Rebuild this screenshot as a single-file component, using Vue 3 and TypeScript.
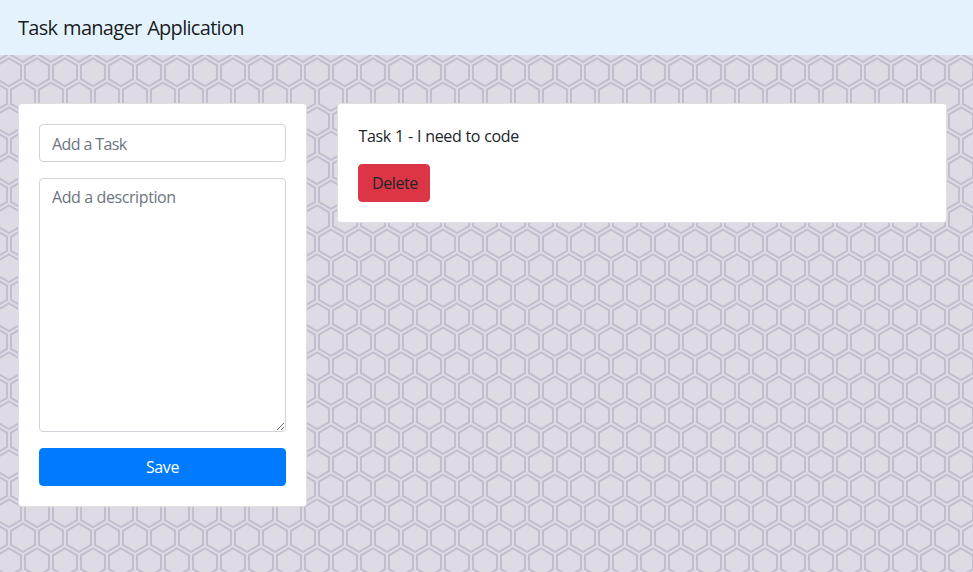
<script setup lang="ts">
import { ref } from 'vue'

interface Task {
  id: number
  title: string
  description: string
}

const title = ref('')
const description = ref('')
const tasks = ref<Task[]>([{ id: 1, title: 'Task 1', description: 'I need to code' }])

function save(): void {
  if (!title.value.trim()) return
  tasks.value.push({ id: Date.now(), title: title.value, description: description.value })
  title.value = ''
  description.value = ''
}

function remove(id: number): void {
  tasks.value = tasks.value.filter((task) => task.id !== id)
}
</script>

<template>
  <div class="page">
    <nav class="navbar">
      <a class="brand">Task manager Application</a>
    </nav>
    <main class="content">
      <form class="card form" @submit.prevent="save">
        <input v-model="title" class="control field" type="text" placeholder="Add a Task" />
        <textarea v-model="description" class="control area" placeholder="Add a description"></textarea>
        <button class="btn primary" type="submit"><span>Save</span></button>
      </form>
      <section class="list">
        <article v-for="task in tasks" :key="task.id" class="card">
          <p class="text">{{ task.title }} - {{ task.description }}</p>
          <button class="btn danger" type="button" @click="remove(task.id)"><span>Delete</span></button>
        </article>
      </section>
    </main>
  </div>
</template>

<style>
body {
  margin: 0;
}
</style>

<style scoped>
.page,
.page * {
  box-sizing: border-box;
}

.page {
  min-height: 100vh;
  font-family: 'Segoe UI', 'Open Sans', 'Noto Sans', sans-serif;
  font-size: 16px;
  line-height: 1.5;
  color: #212529;
  background-color: #dfdbe5;
  background-image: url("data:image/svg+xml,%3Csvg xmlns='http://www.w3.org/2000/svg' width='28' height='49' viewBox='0 0 28 49'%3E%3Cpath fill='%239C92AC' fill-opacity='0.4' fill-rule='nonzero' d='M13.99 9.25l13 7.5v15l-13 7.5L1 31.75v-15l12.99-7.5zM3 17.9v12.7l10.99 6.34 11-6.35V17.9l-11-6.34L3 17.9zM0 15l12.98-7.5V0h-2v6.35L0 12.69v2.3zm0 18.5L12.98 41v8h-2v-6.85L0 35.81v-2.3zM15 0v7.5L27.99 15H28v-2.31h-.01L17 6.35V0h-2zm0 49v-8l12.99-7.5H28v2.31h-.01L17 42.15V49h-2z'/%3E%3C/svg%3E");
  background-position: -5px -1px;
}

.navbar {
  display: flex;
  align-items: center;
  height: 55px;
  padding: 0 18px;
  background: #e3f2fd;
}

.brand {
  font-size: 20px;
  line-height: 30px;
  letter-spacing: -0.7px;
  word-spacing: 1.2px;
  color: rgba(0, 0, 0, 0.9);
  white-space: nowrap;
}

.content {
  display: grid;
  grid-template-columns: 289px 610px;
  align-items: start;
  gap: 30px;
  padding: 48px 0 0 18px;
}

.card {
  display: flex;
  flex-direction: column;
  gap: 16px;
  padding: 20px;
  background: #fff;
  border: 1px solid rgba(0, 0, 0, 0.125);
  border-radius: 4px;
}

.list {
  display: grid;
  gap: 24px;
}

.control {
  display: block;
  width: 100%;
  height: 38px;
  margin: 0;
  padding: 6px 12px;
  font: inherit;
  letter-spacing: -0.4px;
  color: #495057;
  background: #fff;
  border: 1px solid #ced4da;
  border-radius: 4px;
  outline: none;
}

.control::placeholder {
  color: #6c757d;
  opacity: 1;
}

.field {
  padding: 8px 12px 6px;
  letter-spacing: -0.6px;
}

.area {
  height: 254px;
  resize: vertical;
}

.text {
  margin: 0;
  padding-left: 0.6px;
  letter-spacing: -0.4px;
  word-spacing: 0.5px;
}

.btn {
  height: 38px;
  margin: 0;
  padding: 6px 12px;
  font: inherit;
  letter-spacing: -0.4px;
  border: 1px solid transparent;
  border-radius: 4px;
  cursor: pointer;
}

.primary {
  color: #fff;
  background: #007bff;
  border-color: #007bff;
}

.danger {
  align-self: flex-start;
  width: 72px;
  padding-left: 13px;
  color: #212529;
  background: #dc3545;
  border-color: #dc3545;
}
</style>
